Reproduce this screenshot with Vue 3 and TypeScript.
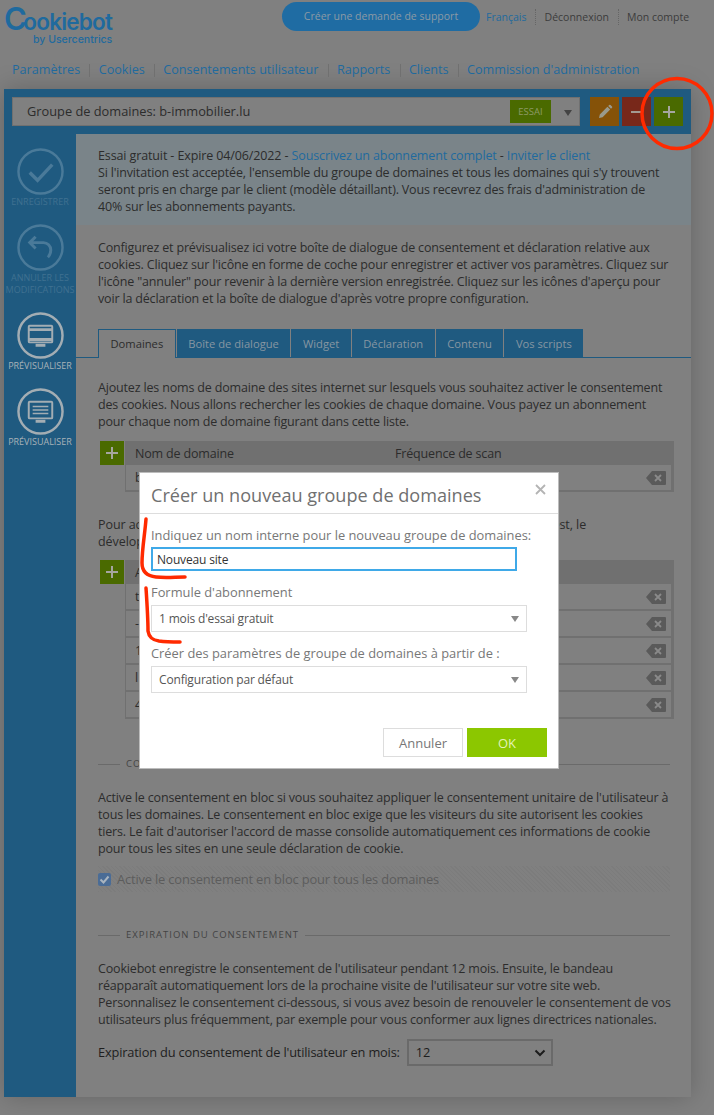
<script setup lang="ts">
const navLinks = ['Paramètres', 'Cookies', 'Consentements utilisateur', 'Rapports', 'Clients', "Commission d'administration"];
const tabs = ['Domaines', 'Boîte de dialogue', 'Widget', 'Déclaration', 'Contenu', 'Vos scripts'];
const aliasRows = ['t', '-', '1', 'l', '4'];
</script>

<template>
  <div class="page">
    <header class="top">
      <div class="logo">
        <div class="logo-name"><span class="logo-c">C</span>ookiebot</div>
        <div class="logo-by">by Usercentrics</div>
      </div>
      <a class="support">Créer une demande de support</a>
      <div class="top-links">
        <a class="lang">Français</a>
        <span>Déconnexion</span>
        <span>Mon compte</span>
      </div>
    </header>

    <nav class="nav">
      <a v-for="link in navLinks" :key="link">{{ link }}</a>
    </nav>

    <main class="main">
      <div class="bar">
        <div class="group-select">
          <span class="group-name">Groupe de domaines: b-immobilier.lu</span>
          <span class="badge">ESSAI</span>
          <span class="caret"></span>
        </div>
        <button class="square orange">
          <svg width="18" height="18" viewBox="0 0 18 18"><path d="M3 15l.8-3.6 7.6-7.6 2.8 2.8-7.6 7.6zM12.2 3l1-1a.9.9 0 0 1 1.3 0l1.5 1.5a.9.9 0 0 1 0 1.300l-1 1z" fill="#9a9a8c" /></svg>
        </button>
        <button class="square red"><span class="minus"></span></button>
        <button class="square green">
          <svg width="14" height="14" viewBox="0 0 14 14"><path d="M7 1v12M1 7h12" stroke="#a6a6a0" stroke-width="2" /></svg>
        </button>
      </div>

      <div class="body">
        <aside class="side">
          <div class="side-item off">
            <svg class="ring" viewBox="0 0 48 48"><circle cx="24" cy="24" r="22.500" /><path d="M13 25l8 8 15-16" stroke-width="3.500" /></svg>
            <span>ENREGISTRER</span>
          </div>
          <div class="side-item off undo">
            <svg class="ring" viewBox="0 0 48 48"><circle cx="24" cy="24" r="22.500" /><path d="M19 13l-6 6 6 6M13 19h14a7.500 7.500 0 0 1 7.500 7.500c0 3-1 5.500-3 7.500" stroke-width="3" /></svg>
            <span>ANNULER LES MODIFICATIONS</span>
          </div>
          <div class="side-item">
            <svg class="ring" viewBox="0 0 48 48"><circle cx="24" cy="24" r="22.500" /><path d="M13 14h22a1 1 0 0 1 1 1v15a1 1 0 0 1-1 1H13a1 1 0 0 1-1-1V15a1 1 0 0 1 1-1z" stroke-width="2" /><path d="M12 18h24M12 28h24" stroke-width="3" /><path d="M19 34h10" stroke-width="3" /></svg>
            <span>PRÉVISUALISER</span>
          </div>
          <div class="side-item">
            <svg class="ring" viewBox="0 0 48 48"><circle cx="24" cy="24" r="22.500" /><path d="M13 14h22a1 1 0 0 1 1 1v15a1 1 0 0 1-1 1H13a1 1 0 0 1-1-1V15a1 1 0 0 1 1-1z" stroke-width="2" /><path d="M16 19h16M16 22.500h16M16 26h16" stroke-width="1.500" /><path d="M19 34h10" stroke-width="3" /></svg>
            <span>PRÉVISUALISER</span>
          </div>
        </aside>

        <section class="content">
          <div class="info">
            <span class="trial">Essai gratuit - Expire 04/06/2022 - <a>Souscrivez un abonnement complet</a> - <a>Inviter le client</a></span><br />
            Si l'invitation est acceptée, l'ensemble du groupe de domaines et tous les domaines qui s'y trouvent<br />
            seront pris en charge par le client (modèle détaillant). Vous recevrez des frais d'administration de<br />
            40% sur les abonnements payants.
          </div>

          <p class="intro">
            Configurez et prévisualisez ici votre boîte de dialogue de consentement et déclaration relative aux<br />
            cookies. Cliquez sur l'icône en forme de coche pour enregistrer et activer vos paramètres. Cliquez sur<br />
            l'icône "annuler" pour revenir à la dernière version enregistrée. Cliquez sur les icônes d'aperçu pour<br />
            voir la déclaration et la boîte de dialogue d'après votre propre configuration.
          </p>

          <div class="tabs">
            <span v-for="(tab, i) in tabs" :key="tab" class="tab" :class="{ active: i === 0 }">{{ tab }}</span>
          </div>

          <div class="pane">
            <p class="p-domains">
              Ajoutez les noms de domaine des sites internet sur lesquels vous souhaitez activer le consentement<br />
              des cookies. Nous allons rechercher les cookies de chaque domaine. Vous payez un abonnement<br />
              pour chaque nom de domaine figurant dans cette liste.
            </p>

            <div class="table">
              <button class="add">
                <svg width="14" height="14" viewBox="0 0 14 14"><path d="M7 1v12M1 7h12" stroke="#a6a6a0" stroke-width="2" /></svg>
              </button>
              <div class="table-main">
                <div class="thead"><span class="col-a">Nom de domaine</span><span>Fréquence de scan</span></div>
                <div class="row">
                  <span>b</span>
                  <svg class="del" viewBox="0 0 20 14"><path d="M6 0h13a1 1 0 0 1 1 1v12a1 1 0 0 1-1 1H6L0 7z" fill="#5a5a5a" /><path d="M9 4l6 6M15 4l-6 6" stroke="#8a8a8a" stroke-width="1.800" /></svg>
                </div>
              </div>
            </div>

            <p class="p-alias">
              Pour accéder au site internet pendant toute la phase de développement et de test, le<br />
              développeur
            </p>

            <div class="table">
              <button class="add">
                <svg width="14" height="14" viewBox="0 0 14 14"><path d="M7 1v12M1 7h12" stroke="#a6a6a0" stroke-width="2" /></svg>
              </button>
              <div class="table-main">
                <div class="thead"><span class="col-a">A</span></div>
                <div v-for="(r, i) in aliasRows" :key="i" class="row">
                  <span>{{ r }}</span>
                  <svg class="del" viewBox="0 0 20 14"><path d="M6 0h13a1 1 0 0 1 1 1v12a1 1 0 0 1-1 1H6L0 7z" fill="#5a5a5a" /><path d="M9 4l6 6M15 4l-6 6" stroke="#8a8a8a" stroke-width="1.800" /></svg>
                </div>
              </div>
            </div>

            <div class="legend legend-bulk"><span>CONSENTEMENT EN BLOC</span></div>
            <p class="p-legend">
              Active le consentement en bloc si vous souhaitez appliquer le consentement unitaire de l'utilisateur à<br />
              tous les domaines. Le consentement en bloc exige que les visiteurs du site autorisent les cookies<br />
              tiers. Le fait d'autoriser l'accord de masse consolide automatiquement ces informations de cookie<br />
              pour tous les sites en une seule déclaration de cookie.
            </p>
            <label class="check-row">
              <span class="check">
                <svg width="13" height="13" viewBox="0 0 13 13"><path d="M2.500 6.500l3 3 5-6" fill="none" stroke="#a9b4bf" stroke-width="2" /></svg>
              </span>
              Active le consentement en bloc pour tous les domaines
            </label>

            <div class="legend legend-exp"><span>EXPIRATION DU CONSENTEMENT</span></div>
            <p class="p-legend">
              Cookiebot enregistre le consentement de l'utilisateur pendant 12 mois. Ensuite, le bandeau<br />
              réapparaît automatiquement lors de la prochaine visite de l'utilisateur sur votre site web.<br />
              Personnalisez le consentement ci-dessous, si vous avez besoin de renouveler le consentement de vos<br />
              utilisateurs plus fréquemment, par exemple pour vous conformer aux lignes directrices nationales.
            </p>
            <div class="expiry">
              Expiration du consentement de l'utilisateur en mois:
              <span class="expiry-select">
                12
                <svg width="12" height="8" viewBox="0 0 12 8"><path d="M1.500 1.500L6 6l4.500-4.500" fill="none" stroke="#1c1c1c" stroke-width="2" /></svg>
              </span>
            </div>
          </div>
        </section>
      </div>
    </main>

    <div class="modal">
      <div class="modal-head">
        <h2>Créer un nouveau groupe de domaines</h2>
        <svg class="close" width="11" height="11" viewBox="0 0 11 11"><path d="M1 1l9 9M10 1l-9 9" stroke="#b4b4b4" stroke-width="1.800" /></svg>
      </div>
      <div class="modal-body">
        <label class="m-label">Indiquez un nom interne pour le nouveau groupe de domaines:</label>
        <div class="m-input">Nouveau site</div>
        <label class="m-label l2">Formule d'abonnement</label>
        <div class="m-select">1 mois d'essai gratuit<span class="m-caret"></span></div>
        <label class="m-label l3">Créer des paramètres de groupe de domaines à partir de :</label>
        <div class="m-select">Configuration par défaut<span class="m-caret"></span></div>
      </div>
      <div class="modal-foot">
        <button class="btn-cancel">Annuler</button>
        <button class="btn-ok">OK</button>
      </div>
    </div>

    <!-- annotations drawn over the screenshot -->
    <svg class="marks" width="714" height="1115" viewBox="0 0 714 1115">
      <ellipse cx="677" cy="113.500" rx="35" ry="35" />
      <path d="M146 519c-1 14-4 30-4 44 0 9 5 13 14 14 10 1 19 0 29 0" />
      <path d="M146 588c1 15 2 30 2 43 1 7 5 9 11 10 7 1 14 1 21 1" />
    </svg>
  </div>
</template>

<style>
html,
body {
  margin: 0;
  background: #808080;
}
</style>

<style scoped>
.page {
  position: relative;
  width: 714px;
  height: 1115px;
  overflow: hidden;
  background: #808080;
  font-family: "Open Sans", "Noto Sans", sans-serif;
  font-size: 12.5px;
  line-height: 17px;
  letter-spacing: -0.17px;
  color: #2c2c2c;
}
p {
  margin: 0;
  white-space: nowrap;
}
button {
  font-family: inherit;
  border: 0;
  padding: 0;
}

.top {
  display: flex;
  align-items: flex-start;
  height: 58px;
}
.logo {
  margin: 7px 0 0 4px;
  width: 278px;
  color: #1f6a9e;
  font-family: Inter, sans-serif;
}
.logo-name {
  font-size: 22.500px;
  line-height: 24px;
  font-weight: 600;
  letter-spacing: -0.8px;
}
.logo-c {
  font-size: 31px;
  font-weight: 600;
  letter-spacing: -3.500px;
}
.logo-by {
  margin: 0 0 0 29px;
  font-size: 10.500px;
  line-height: 11px;
  font-weight: 500;
  letter-spacing: 0;
}
.support {
  width: 198px;
  height: 29px;
  margin-top: 2px;
  border-radius: 15px;
  background: #1f6ca3;
  color: #8b9aa5;
  font-size: 10.500px;
  line-height: 29px;
  text-align: center;
  letter-spacing: 0;
}
.top-links {
  display: flex;
  margin: 9px 0 0 6px;
  font-size: 10.500px;
  line-height: 16px;
  letter-spacing: 0;
  color: #3c3c3c;
}
.top-links .lang {
  color: #1f6a9e;
}
.top-links span {
  margin-left: 8.500px;
  padding-left: 8.500px;
  border-left: 1px dotted #666;
}

.nav {
  display: flex;
  margin: 3px 0 0 12px;
  height: 28px;
  font-size: 12.600px;
  line-height: 18px;
  letter-spacing: 0;
  color: #1f6a9e;
}
.nav a + a {
  margin-left: 9.300px;
  padding-left: 9.300px;
  position: relative;
}
.nav a + a::before {
  content: "";
  position: absolute;
  left: 0;
  top: 3px;
  height: 13px;
  border-left: 1px solid #707070;
}

.main {
  width: 687px;
  margin-left: 4px;
  box-shadow: 0 0 24px rgba(0, 0, 0, 0.22);
}
.bar {
  display: flex;
  align-items: flex-start;
  gap: 3px;
  height: 45px;
  box-sizing: border-box;
  padding: 8px 0 0 8px;
  background: #1f5a80;
}
.group-select {
  display: flex;
  align-items: center;
  width: 568px;
  height: 29px;
  margin-right: 7px;
  box-sizing: border-box;
  border: 1px solid #707070;
  background: #808080;
}
.group-name {
  flex: 1;
  padding-left: 14px;
  font-size: 12.800px;
  letter-spacing: 0;
  color: #2c2c2c;
}
.badge {
  width: 41px;
  height: 23px;
  background: #4a6a00;
  color: #8d9a66;
  font-size: 9.500px;
  line-height: 23px;
  text-align: center;
  letter-spacing: 0;
}
.caret {
  width: 0;
  height: 0;
  margin: 2px 7px 0 13px;
  border: 4px solid transparent;
  border-top: 6px solid #444;
  border-bottom: 0;
}
.square {
  display: flex;
  align-items: center;
  justify-content: center;
  width: 29px;
  height: 29px;
}
.orange {
  background: #855208;
}
.red {
  background: #78281a;
}
.green {
  background: #4a6a00;
}
.minus {
  width: 12px;
  height: 2px;
  background: #a39a92;
}

.body {
  display: flex;
  height: 963px;
}
.side {
  width: 72px;
  flex-shrink: 0;
  background: #1f5a80;
  padding-top: 14px;
  box-sizing: border-box;
}
.side-item {
  display: flex;
  flex-direction: column;
  align-items: center;
  height: 76px;
  font-size: 9px;
  line-height: 12px;
  letter-spacing: 0;
  text-align: center;
  color: #a8b2b8;
}
.side-item.undo {
  height: 88px;
}
.side-item.off {
  color: #3f7191;
}
.ring {
  width: 47px;
  height: 47px;
  margin-bottom: 1px;
  fill: none;
  stroke: #a3adb3;
  stroke-width: 2.500;
}
.off .ring {
  stroke: #4a7a99;
}

.content {
  flex: 1;
  min-width: 0;
}
.info {
  height: 91px;
  box-sizing: border-box;
  padding: 13px 22px 0;
  background: #7a8489;
}
.info a {
  color: #1f6a9e;
}
.trial {
  letter-spacing: -0.12px;
}
.intro {
  padding: 14px 22px 0;
}
.tabs {
  display: flex;
  gap: 1px;
  margin-top: 22px;
  padding-left: 22px;
  height: 29px;
  box-sizing: border-box;
  border-bottom: 1px solid #1f5a80;
}
.tab {
  height: 28px;
  padding: 0 11.500px;
  box-sizing: border-box;
  background: #1f5a80;
  color: #8696a2;
  font-size: 11.200px;
  line-height: 29px;
  letter-spacing: 0;
  white-space: nowrap;
}
.tab.active {
  height: 29px;
  border: 1px solid #1f5a80;
  border-bottom: 0;
  background: #808080;
  color: #2c2c2c;
  line-height: 27px;
}
.pane {
  padding: 0 21px 0 22px;
}
.p-domains {
  margin-top: 21px;
}
.p-alias {
  margin-top: 24px;
  letter-spacing: -0.07px;
}
.table {
  display: flex;
  margin: 10px 0 0 2px;
}
.p-domains + .table {
  margin-top: 11px;
}
.add {
  display: flex;
  align-items: center;
  justify-content: center;
  width: 24px;
  height: 24px;
  flex-shrink: 0;
  margin-right: 1px;
  background: #4a6a00;
}
.table-main {
  width: 549px;
  flex-shrink: 0;
  background: #707070;
  padding-bottom: 2px;
}
.thead {
  display: flex;
  height: 24px;
  padding-left: 10px;
  line-height: 25px;
}
.col-a {
  width: 260px;
}
.row {
  display: flex;
  align-items: center;
  justify-content: space-between;
  height: 25px;
  margin: 0 3px 2px 1px;
  padding: 0 5px 0 9px;
  background: #808080;
}
.row:last-child {
  margin-bottom: 0;
}
.del {
  width: 20px;
  height: 14px;
}

.legend {
  display: flex;
  align-items: center;
  font-size: 9.500px;
  line-height: 14px;
  letter-spacing: 1px;
  color: #444;
}
.legend::before {
  content: "";
  width: 22px;
  margin-right: 6px;
  border-top: 1px solid #6a6a6a;
}
.legend::after {
  content: "";
  flex: 1;
  margin-left: 6px;
  border-top: 1px solid #6a6a6a;
}
.legend-bulk {
  margin-top: 38px;
}
.legend-exp {
  margin-top: 36px;
}
.p-legend {
  margin-top: 18px;
}
.check-row {
  display: flex;
  align-items: center;
  height: 26px;
  margin-top: 9px;
  font-size: 12.900px;
  color: #5c5c5c;
  background: repeating-linear-gradient(45deg, #7c7c7c 0 1px, #808080 1px 3px);
}
.check {
  display: flex;
  align-items: center;
  justify-content: center;
  width: 13px;
  height: 13px;
  margin-right: 6px;
  border-radius: 2px;
  background: #4a6c96;
}
.expiry {
  display: flex;
  align-items: center;
  gap: 7px;
  margin-top: 11px;
  font-size: 12.800px;
  color: #1e1e1e;
}
.expiry-select {
  display: flex;
  align-items: center;
  justify-content: space-between;
  width: 146px;
  height: 27px;
  box-sizing: border-box;
  padding: 0 5px 0 7px;
  border: 2px solid #6a6a6a;
}

.modal {
  position: absolute;
  left: 139px;
  top: 472px;
  width: 420px;
  height: 297px;
  box-sizing: border-box;
  border: 1px solid #bcbcbc;
  background: #fff;
  color: #777;
}
.modal-head {
  position: relative;
  height: 40px;
  border-bottom: 1px solid #ddd;
}
.modal-head h2 {
  margin: 0;
  padding: 10px 0 0 11px;
  font-size: 18.100px;
  line-height: 24px;
  font-weight: 400;
  letter-spacing: 0;
  color: #707070;
}
.close {
  position: absolute;
  right: 12px;
  top: 11px;
}
.modal-body {
  padding: 13px 31px 0 11px;
}
.m-label {
  display: block;
  font-size: 12.870px;
  line-height: 17px;
  letter-spacing: 0;
  white-space: nowrap;
}
.m-input {
  width: 366px;
  height: 24px;
  margin-top: 3px;
  padding-left: 4px;
  box-sizing: border-box;
  border: 2px solid #3fa9e8;
  color: #333;
  font-size: 12px;
  line-height: 21px;
}
.m-label.l2 {
  margin-top: 13px;
}
.m-label.l3 {
  margin-top: 13px;
}
.m-select {
  display: flex;
  align-items: center;
  justify-content: space-between;
  height: 27px;
  margin-top: 4px;
  padding: 0 7px;
  box-sizing: border-box;
  border: 1px solid #ddd;
  font-size: 12px;
  color: #555;
}
.m-caret {
  width: 0;
  height: 0;
  border: 4px solid transparent;
  border-top: 6px solid #888;
  border-bottom: 0;
}
.modal-foot {
  position: absolute;
  right: 11px;
  bottom: 11px;
  display: flex;
  gap: 4px;
}
.btn-cancel,
.btn-ok {
  width: 80px;
  height: 29px;
  font-size: 13px;
}
.btn-cancel {
  box-sizing: border-box;
  border: 1px solid #ddd;
  background: #fff;
  color: #777;
}
.btn-ok {
  background: #8cc700;
  color: #e4f3b8;
}

.marks {
  position: absolute;
  left: 0;
  top: 0;
  pointer-events: none;
  fill: none;
  stroke: #ff2a00;
  stroke-width: 3.500;
  stroke-linecap: round;
}
</style>
